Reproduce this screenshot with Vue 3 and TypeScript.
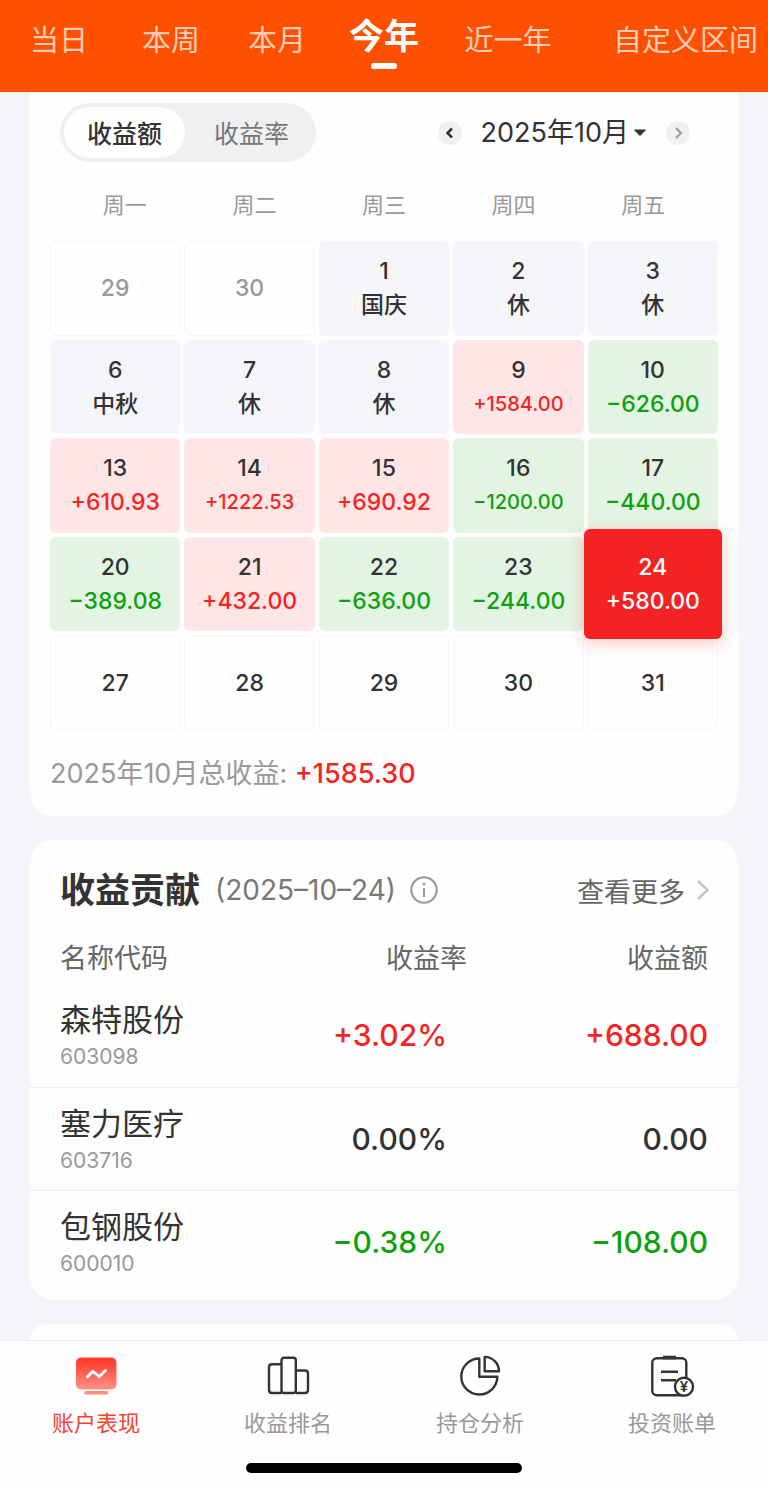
<script setup lang="ts">
import { ref } from 'vue'

type Tone = 'up' | 'down' | 'rest' | 'empty'

interface Day {
  day: number
  tone: Tone
  note?: string
  muted?: boolean
}

interface Stock {
  name: string
  code: string
  rate: string
  amount: string
  tone: 'up' | 'down' | 'flat'
}

const ranges = ['当日', '本周', '本月', '今年', '近一年', '自定义区间']
const activeRange = ref('今年')

const modes = ['收益额', '收益率']
const activeMode = ref('收益额')

const weekdays = ['周一', '周二', '周三', '周四', '周五']

const days: Day[] = [
  { day: 29, tone: 'empty', muted: true },
  { day: 30, tone: 'empty', muted: true },
  { day: 1, tone: 'rest', note: '国庆' },
  { day: 2, tone: 'rest', note: '休' },
  { day: 3, tone: 'rest', note: '休' },
  { day: 6, tone: 'rest', note: '中秋' },
  { day: 7, tone: 'rest', note: '休' },
  { day: 8, tone: 'rest', note: '休' },
  { day: 9, tone: 'up', note: '+1584.00' },
  { day: 10, tone: 'down', note: '−626.00' },
  { day: 13, tone: 'up', note: '+610.93' },
  { day: 14, tone: 'up', note: '+1222.53' },
  { day: 15, tone: 'up', note: '+690.92' },
  { day: 16, tone: 'down', note: '−1200.00' },
  { day: 17, tone: 'down', note: '−440.00' },
  { day: 20, tone: 'down', note: '−389.08' },
  { day: 21, tone: 'up', note: '+432.00' },
  { day: 22, tone: 'down', note: '−636.00' },
  { day: 23, tone: 'down', note: '−244.00' },
  { day: 24, tone: 'up', note: '+580.00' },
  { day: 27, tone: 'empty' },
  { day: 28, tone: 'empty' },
  { day: 29, tone: 'empty' },
  { day: 30, tone: 'empty' },
  { day: 31, tone: 'empty' },
]
const selectedDay = ref(24)

const stocks: Stock[] = [
  { name: '森特股份', code: '603098', rate: '+3.02%', amount: '+688.00', tone: 'up' },
  { name: '塞力医疗', code: '603716', rate: '0.00%', amount: '0.00', tone: 'flat' },
  { name: '包钢股份', code: '600010', rate: '−0.38%', amount: '−108.00', tone: 'down' },
]

function select(d: Day) {
  if (!d.muted) selectedDay.value = d.day
}
</script>

<template>
  <div class="page">
    <nav class="ranges">
      <button
        v-for="r in ranges"
        :key="r"
        type="button"
        class="range"
        :class="{ active: r === activeRange }"
        @click="activeRange = r"
      >{{ r }}</button>
    </nav>

    <main class="content">
      <section class="card calendar">
        <div class="toolbar">
          <div class="switch">
            <button
              v-for="m in modes"
              :key="m"
              type="button"
              :class="{ active: m === activeMode }"
              @click="activeMode = m"
            >{{ m }}</button>
          </div>
          <div class="month">
            <button type="button" class="step" aria-label="上个月">
              <svg viewBox="0 0 24 24"><path d="M14 7.500 9.500 12 14 16.500" /></svg>
            </button>
            <button type="button" class="current">
              2025年10月
              <svg viewBox="0 0 14 8"><path d="M1.500 1h11L7 6.500z" /></svg>
            </button>
            <button type="button" class="step next" aria-label="下个月">
              <svg viewBox="0 0 24 24"><path d="M10 7l5 5-5 5" /></svg>
            </button>
          </div>
        </div>

        <div class="weekdays">
          <span v-for="w in weekdays" :key="w">{{ w }}</span>
        </div>

        <div class="days">
          <button
            v-for="(d, i) in days"
            :key="i"
            type="button"
            class="day"
            :class="[d.tone, { muted: d.muted, selected: d.day === selectedDay }]"
            @click="select(d)"
          >
            <span>{{ d.day }}</span>
            <span v-if="d.note" class="note" :class="{ long: d.note.length > 7 }">{{ d.note }}</span>
          </button>
        </div>

        <p class="total">2025年10月总收益: <strong>+1585.30</strong></p>
      </section>

      <section class="card contribution">
        <header class="heading">
          <h2>收益贡献</h2>
          <span class="date">(2025–10–24)</span>
          <button type="button" class="info" aria-label="说明">
            <svg viewBox="0 0 28 28">
              <circle cx="14" cy="14" r="12.700" />
              <path d="M14 12v9" />
              <circle class="dot" cx="14" cy="8" r="1.400" />
            </svg>
          </button>
          <a href="#" class="more">
            查看更多
            <svg viewBox="0 0 14 24"><path d="M2 3l9.500 9L2 21" /></svg>
          </a>
        </header>

        <table>
          <thead>
            <tr>
              <th scope="col" class="name">名称代码</th>
              <th scope="col" class="rate">收益率</th>
              <th scope="col" class="amount">收益额</th>
            </tr>
          </thead>
          <tbody>
            <tr v-for="s in stocks" :key="s.code">
              <td class="name">
                <span class="title">{{ s.name }}</span>
                <span class="code">{{ s.code }}</span>
              </td>
              <td class="rate" :class="s.tone">{{ s.rate }}</td>
              <td class="amount" :class="s.tone">{{ s.amount }}</td>
            </tr>
          </tbody>
        </table>
      </section>

      <section class="card following"></section>
    </main>

    <footer class="dock">
      <nav class="tabs">
        <a href="#" class="tab active">
          <svg viewBox="0 0 48 44">
            <defs>
              <linearGradient id="screen" x1="0" y1="0" x2="0" y2="1">
                <stop offset="0.150" stop-color="#ff4030" />
                <stop offset="1" stop-color="#ff9488" />
              </linearGradient>
            </defs>
            <rect x="4" y="3.500" width="40.500" height="32" rx="5" fill="url(#screen)" />
            <rect x="12.300" y="37" width="24" height="3.500" rx="1.500" fill="#ff8d80" />
            <path d="M14.700 23.700l6-6.400 6.600 5.400 7-7" fill="none" stroke="#fff" stroke-width="2.800" />
          </svg>
          账户表现
        </a>
        <a href="#" class="tab">
          <svg viewBox="0 0 48 44" class="line">
            <path d="M17.500 10.300H8q-3 0-3 3V36q0 3 3 3h9.500" />
            <rect x="17.500" y="3.800" width="14.300" height="35.200" rx="2.500" />
            <path d="M31.800 16.500H41q3 0 3 3V36q0 3-3 3h-9.200" />
          </svg>
          收益排名
        </a>
        <a href="#" class="tab">
          <svg viewBox="0 0 48 44" class="line">
            <path d="M23.300 4.500A18 18 0 1 0 41.300 22.700H23.300z" />
            <path d="M28.700 2.900A14.500 14.500 0 0 1 43 17.300H28.700z" />
          </svg>
          持仓分析
        </a>
        <a href="#" class="tab">
          <svg viewBox="0 0 48 44" class="line">
            <rect x="4.300" y="4.300" width="34" height="37" rx="4.500" />
            <path d="M15 3.500h13" stroke-width="3.600" />
            <path d="M13 17.700h17M13 26.300h15" />
            <circle cx="36" cy="32.700" r="9" fill="#fefefe" />
            <text x="36" y="38" text-anchor="middle">¥</text>
          </svg>
          投资账单
        </a>
      </nav>
      <div class="home-bar"></div>
    </footer>
  </div>
</template>

<style>
body {
  margin: 0;
  background: #f5f6f9;
}
</style>

<style scoped>
.page {
  display: flex;
  flex-direction: column;
  min-height: 100vh;
  color: #333;
  font-family: Inter, "Noto Sans CJK SC", sans-serif;
}

button {
  margin: 0;
  padding: 0;
  border: 0;
  background: none;
  color: inherit;
  font: inherit;
  cursor: pointer;
}

a {
  color: inherit;
  text-decoration: none;
}

svg {
  display: block;
  flex: none;
  fill: none;
  stroke: currentColor;
}

/* Range tabs */
.ranges {
  display: grid;
  grid-template-columns: 118fr 106fr 106fr 108fr 140fr 190fr;
  height: 92px;
  background: #ff5000;
}

.range {
  position: relative;
  padding-bottom: 16px;
  color: #ffcdb6;
  font-size: 29px;
  white-space: nowrap;
}

.range:last-child {
  justify-self: end;
  padding-right: 10px;
}

.range.active {
  padding-bottom: 26px;
  color: #fff;
  font-size: 35px;
  font-weight: 700;
}

.range.active::after {
  content: "";
  position: absolute;
  left: 50%;
  top: 63px;
  width: 26px;
  height: 6px;
  margin-left: -13px;
  border-radius: 3px;
  background: #fff;
}

/* Cards */
.content {
  display: flex;
  flex: 1;
  flex-direction: column;
  gap: 24px;
  padding: 0 30px;
}

.card {
  border-radius: 24px;
  background: #fefefe;
}

.calendar {
  padding: 11px 20px 22px;
  border-radius: 0 0 24px 24px;
}

.following {
  flex: 1;
  min-height: 14px;
  border-radius: 24px 24px 0 0;
}

/* Toolbar */
.toolbar {
  display: flex;
  align-items: center;
  justify-content: space-between;
  padding: 0 28px 0 10px;
}

.switch {
  display: flex;
  gap: 6px;
  padding: 4px;
  border-radius: 30px;
  background: #f0f0f3;
}

.switch button {
  height: 51px;
  padding: 0 23px 2px;
  border-radius: 26px;
  color: #777;
  font-size: 25px;
}

.switch button.active {
  background: #fefefe;
  color: #333;
  font-weight: 500;
}

.month {
  display: flex;
  align-items: center;
  gap: 19px;
}

.step {
  width: 24px;
  height: 24px;
  border-radius: 50%;
  background: #f0f0f3;
  color: #333;
}

.step svg {
  width: 24px;
  height: 24px;
  stroke-width: 2.5;
}

.step.next {
  color: #999;
}

.step.next svg {
  stroke-width: 2;
}

.current {
  display: flex;
  align-items: center;
  gap: 4px;
  font-size: 27px;
  line-height: 40px;
}

.current svg {
  width: 14px;
  height: 8px;
  fill: #333;
  stroke-linejoin: round;
}

/* Calendar */
.weekdays {
  display: grid;
  grid-template-columns: repeat(5, 1fr);
  padding: 27px 10px 20px;
  color: #999;
  font-size: 22px;
  line-height: 32px;
  text-align: center;
}

.days {
  display: grid;
  grid-template-columns: repeat(5, 1fr);
  grid-auto-rows: 1fr;
  gap: 4px;
  min-height: 489px;
}

.day {
  display: flex;
  flex-direction: column;
  align-items: center;
  justify-content: center;
  border: 1px solid transparent;
  border-radius: 6px;
  font-size: 23px;
  font-weight: 500;
  line-height: 34px;
}

.day.empty {
  border-color: #f5f6f8;
}

.day.muted {
  color: #999;
}

.day.rest {
  background: #f5f6f9;
}

.day.up {
  background: #fee6e6;
}

.day.down {
  background: #e3f4e3;
}

.up .note {
  color: #f52424;
}

.down .note {
  color: #0fa00f;
}

.note.long {
  font-size: 20px;
}

.day.selected {
  position: relative;
  z-index: 1;
  margin: -8px -4px;
  background: #f42222;
  box-shadow: 0 4px 16px rgba(244, 34, 34, 0.25);
  color: #fff;
}

.selected .note {
  color: #fff;
}

.total {
  margin: 0;
  padding-top: 24px;
  color: #999;
  font-size: 27px;
  line-height: 40px;
}

.total strong {
  color: #f52424;
  font-weight: 500;
}

/* Contribution */
.contribution {
  padding: 28px 0 7px;
}

.heading {
  display: flex;
  align-items: center;
  height: 44px;
  padding: 0 28px 0 30px;
  margin-bottom: 16px;
}

h2 {
  margin: 0;
  font-size: 35px;
  font-weight: 700;
  line-height: 44px;
}

.date {
  margin-left: 15px;
  color: #777;
  font-size: 28px;
}

.info {
  margin-left: 14px;
  color: #999;
}

.info svg {
  width: 28px;
  height: 28px;
  stroke-width: 2;
}

.info .dot {
  fill: #999;
  stroke: none;
}

.more {
  display: flex;
  align-items: center;
  gap: 11px;
  margin-left: auto;
  color: #666;
  font-size: 27px;
}

.more svg {
  width: 14px;
  height: 24px;
  color: #c4c4c4;
  stroke-width: 2.5;
}

table {
  width: 100%;
  border-collapse: collapse;
  table-layout: fixed;
}

th,
td {
  box-sizing: border-box;
  padding: 0;
  text-align: right;
}

th {
  height: 56px;
  color: #666;
  font-size: 27px;
  font-weight: 400;
}

td {
  height: 103px;
  font-size: 30px;
  font-weight: 500;
}

tbody tr + tr td {
  border-top: 1px solid #ededf0;
}

.name {
  width: 36%;
  padding-left: 30px;
  text-align: left;
}

th.rate {
  width: 26%;
  padding-right: 2px;
}

td.rate {
  padding-right: 22px;
}

.amount {
  padding-right: 30px;
}

td.up {
  color: #f52424;
}

td.down {
  color: #0fa00f;
}

.title,
.code {
  display: block;
  font-weight: 400;
}

.title {
  padding-top: 2px;
  font-size: 31px;
  line-height: 42px;
}

.code {
  color: #999;
  font-size: 21px;
  line-height: 32px;
}

/* Bottom dock */
.dock {
  border-top: 1px solid #ededf0;
  background: #fefefe;
}

.tabs {
  display: grid;
  grid-template-columns: repeat(4, 1fr);
  padding-top: 13px;
}

.tab {
  display: flex;
  flex-direction: column;
  align-items: center;
  gap: 9px;
  color: #999;
  font-size: 22px;
  line-height: 32px;
}

.tab.active {
  color: #fb4230;
}

.tab svg {
  width: 48px;
  height: 44px;
  stroke: none;
}

.tab svg.line {
  stroke: #333;
  stroke-width: 2.4;
  stroke-linejoin: round;
}

.tab text {
  fill: #333;
  stroke: none;
  font-size: 15px;
  font-weight: 600;
}

.home-bar {
  width: 36%;
  height: 10px;
  margin: 24px auto 16px;
  border-radius: 5px;
  background: #000;
}
</style>
